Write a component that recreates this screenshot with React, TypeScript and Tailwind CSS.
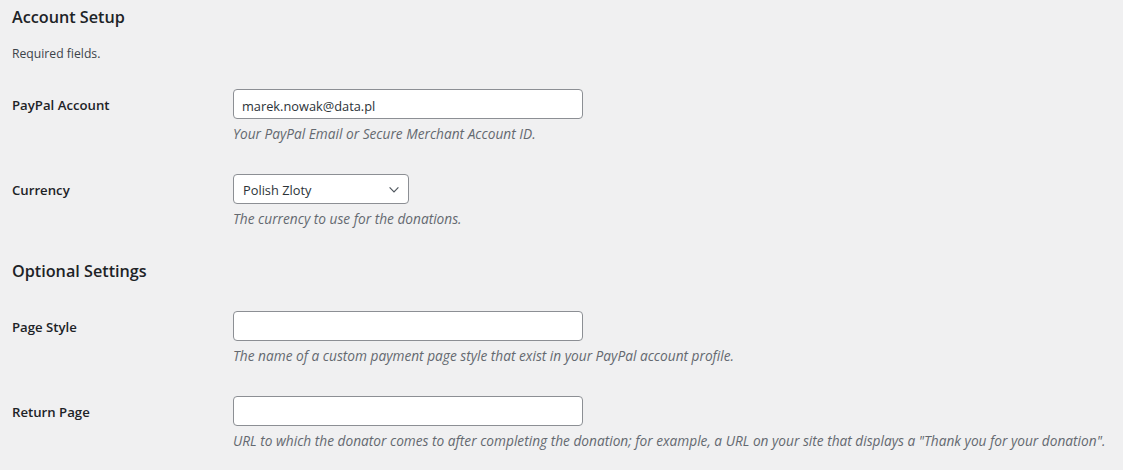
import React from 'react';

const font = { fontFamily: '"Open Sans", "Noto Sans", sans-serif' };

const Row = ({ label, children, desc }: { label: string; children: React.ReactNode; desc: string }) => (
  <div className="flex h-[85px]">
    <div className="w-[221px] shrink-0 pt-[18px]">
      <div className="h-[30px] flex items-center text-[13.2px] font-semibold text-[#1d2327]">{label}</div>
    </div>
    <div className="pt-[16px]">
      {children}
      <p className="mt-[5px] h-[20px] leading-[20px] text-[13.7px] italic text-[#646970] whitespace-nowrap">{desc}</p>
    </div>
  </div>
);

const TextInput = ({ value }: { value?: string }) => (
  <input
    type="text"
    defaultValue={value}
    className="block w-[350px] h-[30px] px-[8px] pt-[3px] rounded-[4px] border border-[#8c8f94] bg-white text-[12.8px] text-[#2c3338] outline-none"
  />
);

const App = () => {
  return (
    <div className="min-h-[470px] bg-[#f0f0f1] pl-[12px]" style={font}>
      <h2 className="pt-[6px] h-[28px] leading-[22px] text-[16.2px] font-semibold text-[#1d2327]">Account Setup</h2>
      <p className="mt-[16px] h-[20px] leading-[20px] text-[12.2px] text-[#3c434a]">Required fields.</p>
      <div className="mt-[9px]">
        <Row label="PayPal Account" desc="Your PayPal Email or Secure Merchant Account ID.">
          <TextInput value="marek.nowak@data.pl" />
        </Row>
        <Row label="Currency" desc="The currency to use for the donations.">
          <div className="relative w-[176px] h-[30px] rounded-[4px] border border-[#8c8f94] bg-white flex items-center pl-[9px] pt-[3px] text-[12.8px] text-[#2c3338]">
            <span>Polish Zloty</span>
            <svg className="absolute right-[6px] top-[6px]" width="16" height="16" viewBox="0 0 20 20">
              <path d="M4.5 8l5.5 5.5 5.5-5.5" fill="none" stroke="#50575e" strokeWidth="1.5" />
            </svg>
          </div>
        </Row>
      </div>
      <h2 className="mt-[17px] h-[22px] leading-[22px] text-[16.2px] font-semibold text-[#1d2327]">Optional Settings</h2>
      <div className="mt-[13px]">
        <Row label="Page Style" desc="The name of a custom payment page style that exist in your PayPal account profile.">
          <TextInput />
        </Row>
        <Row
          label="Return Page"
          desc={'URL to which the donator comes to after completing the donation; for example, a URL on your site that displays a "Thank you for your donation".'}
        >
          <TextInput />
        </Row>
      </div>
    </div>
  );
};

export default App;
